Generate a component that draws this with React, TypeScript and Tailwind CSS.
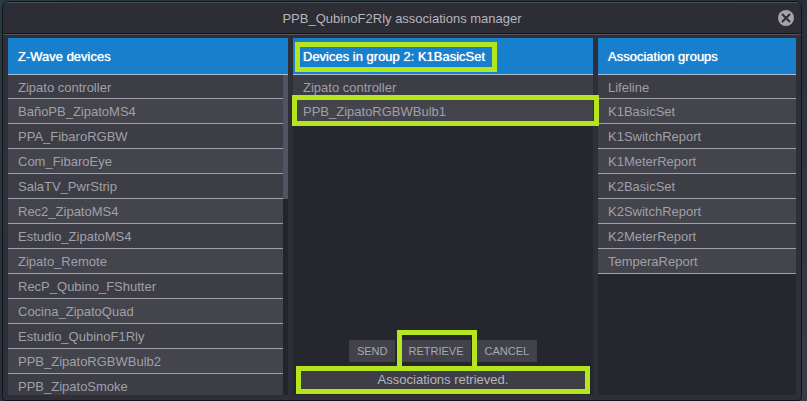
import { useState } from 'react';
import type { ReactNode } from 'react';

const DEVICES = [
  'Zipato controller',
  'BañoPB_ZipatoMS4',
  'PPA_FibaroRGBW',
  'Com_FibaroEye',
  'SalaTV_PwrStrip',
  'Rec2_ZipatoMS4',
  'Estudio_ZipatoMS4',
  'Zipato_Remote',
  'RecP_Qubino_FShutter',
  'Cocina_ZipatoQuad',
  'Estudio_QubinoF1Rly',
  'PPB_ZipatoRGBWBulb2',
  'PPB_ZipatoSmoke',
];

const GROUP_DEVICES = ['Zipato controller', 'PPB_ZipatoRGBWBulb1'];

const GROUPS = [
  'Lifeline',
  'K1BasicSet',
  'K1SwitchReport',
  'K1MeterReport',
  'K2BasicSet',
  'K2SwitchReport',
  'K2MeterReport',
  'TemperaReport',
];

// Lime frame laid over whatever it highlights
function Highlight({ className }: { className: string }) {
  return <span className={`absolute z-10 border-5 border-[#b5e61d] pointer-events-none ${className}`} />;
}

function ColumnHeader({ children }: { children: ReactNode }) {
  return (
    <h2 className="relative h-[37px] shrink-0 flex items-center px-2.5 pt-0.5 bg-[#177fcb] border-b border-[#a9bfd2] text-white [text-shadow:0_0_1px_#fff] whitespace-nowrap">
      {children}
    </h2>
  );
}

function Row({ name, marked }: { name: string; marked?: boolean }) {
  return (
    <li className="relative h-[25px] first:h-6 border-b border-[#a0a0aa] bg-[#3d3d46] even:bg-[#44444d]">
      <button className="w-full h-full px-2.5 pt-0.5 text-left whitespace-nowrap">{name}</button>
      {marked && <Highlight className="-left-px -right-1.5 -top-1 -bottom-[3px]" />}
    </li>
  );
}

export default function App() {
  const [status, setStatus] = useState('Associations retrieved.');

  const buttonClass = 'h-[22px] px-2 bg-[#42424b] text-[11px] text-[#a9a9b1]';

  return (
    <div className="h-screen pt-px pl-0.5 pr-[5px] bg-linear-to-br from-[#2a3b44] via-[#28303b] to-[#3b3b47] font-['Liberation_Sans',Arial,sans-serif] text-[13px] text-[#a0a0a8]">
      <div className="h-full flex flex-col rounded-t-md rounded-b-sm border border-[#11131a] bg-[#2f2f39] overflow-hidden">
        {/* Title bar */}
        <header className="relative h-8 shrink-0 flex items-center justify-center border-t border-t-[#4a4e57] border-b border-b-[#15151b] bg-[#2d2d36]">
          <h1 className="pt-0.5 text-[#b6b6bc]">PPB_QubinoF2Rly associations manager</h1>
          <button aria-label="Close" className="absolute right-[7px] top-[7px]">
            <svg width="16" height="16" viewBox="0 0 16 16">
              <circle cx="8" cy="8" r="8" fill="#a3a3a9" />
              <path d="M4 4l8 8M12 4l-8 8" stroke="#2d2d36" strokeWidth="2" />
            </svg>
          </button>
        </header>

        <main className="flex-1 min-h-0 flex gap-[5px] px-[5px] pt-[3px] pb-[5px] border-t border-[#55555e]">
          <section className="flex-[280] min-w-0 flex flex-col bg-[#26262e]">
            <ColumnHeader>Z-Wave devices</ColumnHeader>
            <div className="flex-1 min-h-0 flex">
              <ul className="flex-1 min-w-0 overflow-hidden">
                {DEVICES.map((name) => (
                  <Row key={name} name={name} />
                ))}
              </ul>
              <div className="w-[5px] bg-[#24242c]">
                <div className="h-31 bg-[#535361]" />
              </div>
            </div>
          </section>

          <section className="flex-[300] min-w-0 flex flex-col bg-[#26262e]">
            <ColumnHeader>
              Devices in group 2: K1BasicSet
              <Highlight className="left-0.5 w-[202px] top-1 bottom-0.5" />
            </ColumnHeader>
            <ul className="flex-1">
              {GROUP_DEVICES.map((name) => (
                <Row key={name} name={name} marked={name === 'PPB_ZipatoRGBWBulb1'} />
              ))}
            </ul>
            <div className="flex justify-center gap-[5px]">
              <button className={buttonClass} onClick={() => setStatus('Associations sent.')}>
                SEND
              </button>
              <div className="relative flex">
                <button className={buttonClass} onClick={() => setStatus('Associations retrieved.')}>
                  RETRIEVE
                </button>
                <Highlight className="-left-[3px] -right-1.5 -top-2.5 -bottom-[9px]" />
              </div>
              <button className={buttonClass} onClick={() => setStatus('')}>
                CANCEL
              </button>
            </div>
            <div className="relative h-7 mt-1 mb-px mx-[3px] flex items-center justify-center bg-[#3e3e47] text-[#b6b6bc]">
              <output>{status}</output>
              <Highlight className="inset-0" />
            </div>
          </section>

          <section className="flex-[198] min-w-0 flex flex-col bg-[#26262e]">
            <ColumnHeader>Association groups</ColumnHeader>
            <ul>
              {GROUPS.map((name) => (
                <Row key={name} name={name} />
              ))}
            </ul>
          </section>
        </main>
      </div>
    </div>
  );
}
